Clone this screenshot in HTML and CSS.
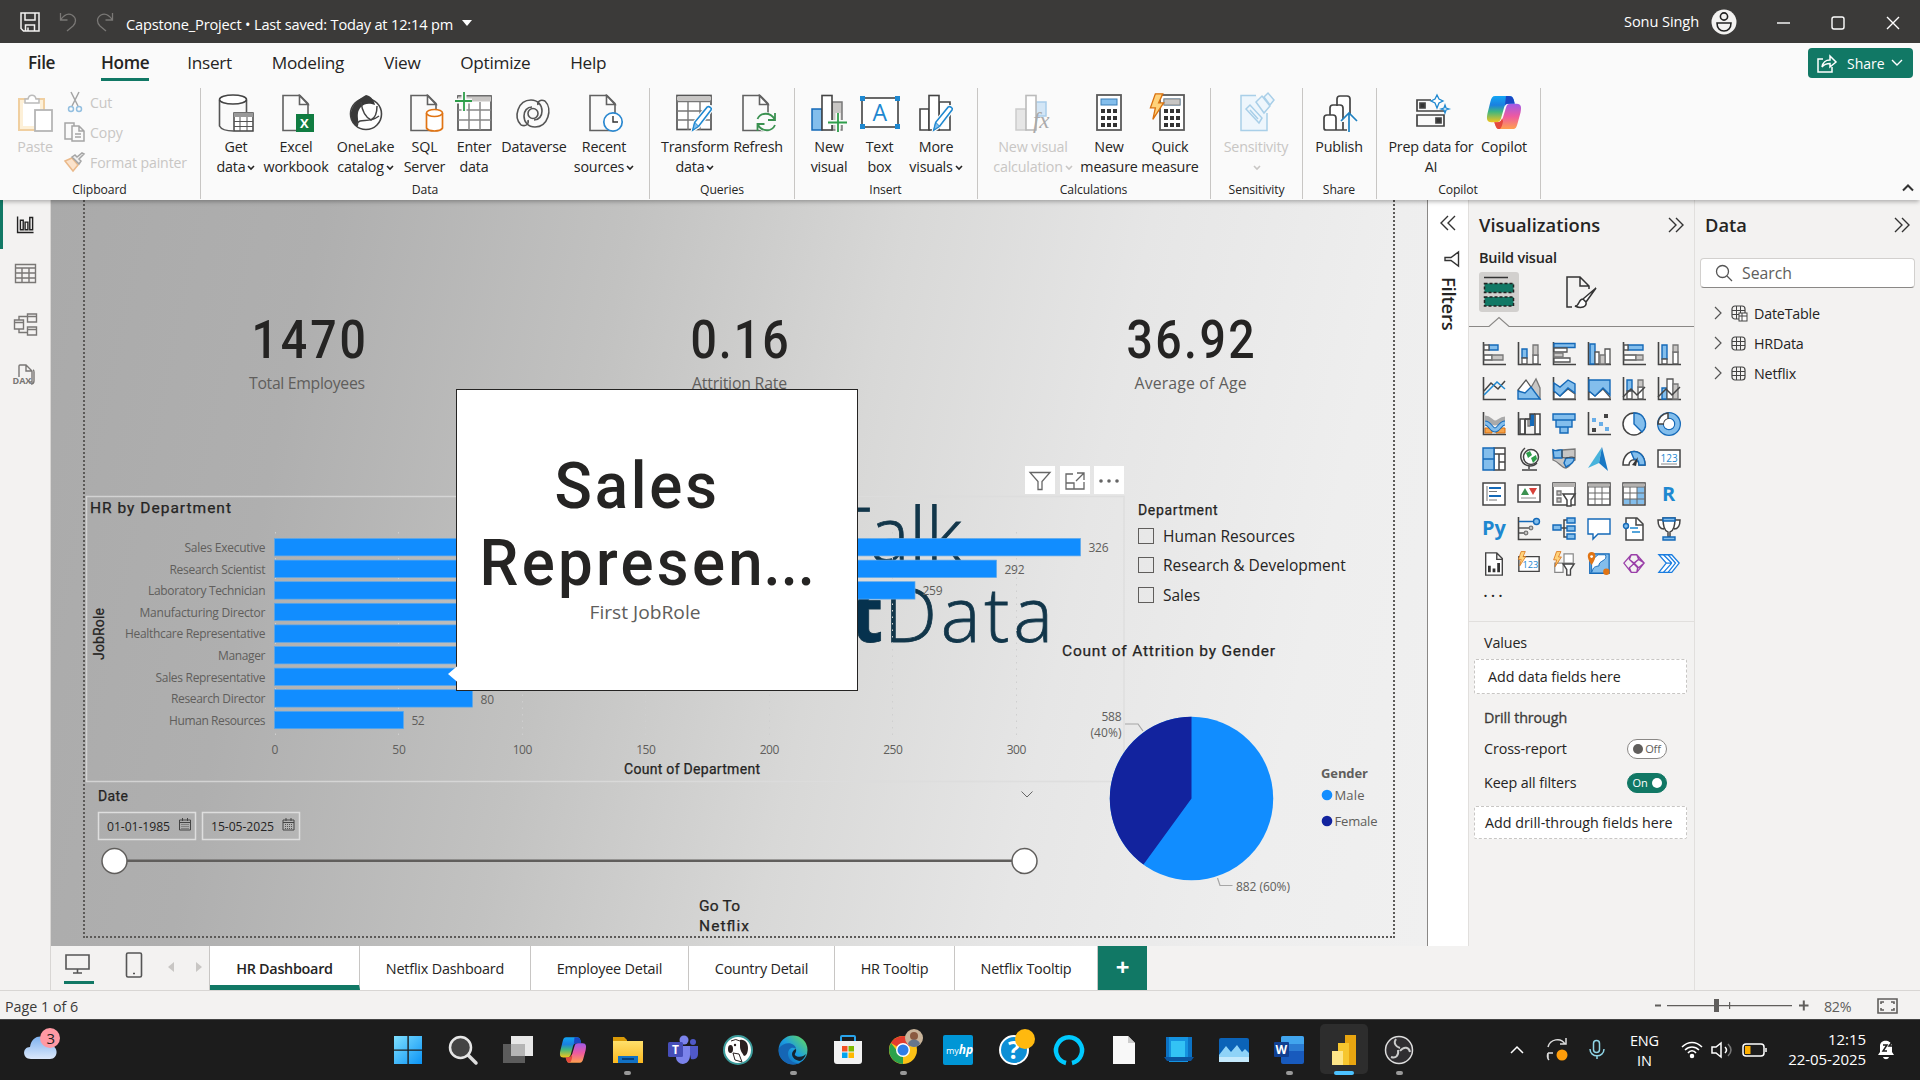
FILE: index.html
```html
<!DOCTYPE html>
<html lang="en">
<head>
<meta charset="utf-8">
<title>Capstone_Project</title>
<link rel="stylesheet" href="styles.css">
</head>
<body>
<svg class="defs" width="0" height="0">
  <defs>
    <linearGradient id="cpA" x1="0" y1="0" x2="0" y2="1"><stop offset="0" stop-color="#12a5f4"/><stop offset=".35" stop-color="#1a80e0"/><stop offset=".6" stop-color="#3fb680"/><stop offset="1" stop-color="#f4c51c"/></linearGradient>
    <linearGradient id="cpB" x1="0" y1="0" x2="0" y2="1"><stop offset="0" stop-color="#a05ae8"/><stop offset=".5" stop-color="#ee5aa0"/><stop offset="1" stop-color="#ffa04e"/></linearGradient>
    <linearGradient id="win" x1="0" y1="0" x2="1" y2="1"><stop offset="0" stop-color="#7fe0ff"/><stop offset="1" stop-color="#0b93f5"/></linearGradient>
    <linearGradient id="edge" x1="0" y1="1" x2="1" y2="0"><stop offset="0" stop-color="#0c59a4"/><stop offset=".5" stop-color="#1b9de2"/><stop offset="1" stop-color="#6be04e"/></linearGradient>
    <linearGradient id="fold" x1="0" y1="0" x2="0" y2="1"><stop offset="0" stop-color="#ffe06b"/><stop offset="1" stop-color="#fbb81f"/></linearGradient>
    <linearGradient id="cloud" x1="0" y1="0" x2="0" y2="1"><stop offset="0" stop-color="#7fb2ef"/><stop offset="1" stop-color="#dbe8fb"/></linearGradient>
    <symbol id="copilot" viewBox="0 0 36 36">
      <path d="M9 1h14c3 0 4 1 5 4l1 4h-6c-3 0-4 1-5 4l-3 11c-1 3-2 4-5 4H5c-5 0-5-4-4-9L4 7c1-4 2-6 5-6z" fill="url(#cpA)"/>
      <path d="M20 1h3c3 0 4 1 5 4l1 4h-6c-2 0-3 0-4 2z" fill="#1947c4"/>
      <path d="M27 35H13c-3 0-3-2-4-5l-1-2h4c3 0 4-2 5-5l3-10c1-3 2-4 5-4h6c5 0 5 4 4 9l-3 11c-1 4-2 6-5 6z" fill="url(#cpB)"/>
      <path d="M8 28h3c3 0 4-1 5-4l1 3c-1 5-2 8-4 8-3 0-4-4-5-7z" fill="#e4493c"/>
    </symbol>
    <symbol id="doc" viewBox="0 0 36 38"><path d="M5 1.500h17l8 8V36.500H5z" fill="#fafafa" stroke="#616161" stroke-width="1.600"/><path d="M21.500 1.500v9H30z" fill="#fff" stroke="#616161" stroke-width="1.600"/></symbol>
    <symbol id="pencil" viewBox="0 0 22 28"><path d="M2 26l2-8L17 2c2-2 5 0 4 3L8 22z" fill="#fff" stroke="#fafafa" stroke-width="4"/><path d="M2 26l2-8L17 2c2-1 5 1 4 3L8 22z" fill="#fff" stroke="#1e88d0" stroke-width="1.600"/><path d="M2 26l2-8 4 4z" fill="#83beec" stroke="#1e88d0"/></symbol>
    <symbol id="dd" viewBox="0 0 8 6"><path d="M1 1l3 3 3-3" fill="none" stroke="currentColor" stroke-width="1.600"/></symbol>
    <symbol id="bolt" viewBox="0 0 18 34"><path d="M7 1h9l-5 11h6L4 32l3-14H1z" fill="#ffd27a" stroke="#d9700f" stroke-width="1.600"/></symbol>
    <symbol id="calc" viewBox="0 0 26 38"><rect x="1" y="1" width="24" height="35" fill="#fff" stroke="#5a5a5a" stroke-width="1.800"/><rect x="5" y="5" width="16" height="6" fill="#83beec" stroke="#3b7fb8"/><path d="M5 17h16M5 24h16M5 31h16" stroke="#333" stroke-width="4" stroke-dasharray="4 2"/></symbol>
    <symbol id="chev2" viewBox="0 0 16 16"><path d="M1 1l7 7-7 7M8 1l7 7-7 7" fill="none" stroke="#333" stroke-width="1.400"/></symbol>
    <symbol id="cal" viewBox="0 0 13 13"><path d="M1 2h11v10H1zM1 4.500h11M4 0v3M9 0v3" fill="none" stroke="#444"/><path d="M3 6.500h7M3 8.500h7M3 10.500h7" stroke="#555" stroke-dasharray="1 1"/></symbol>
    <symbol id="ax" viewBox="0 0 24 24"><path d="M1.500 0v22.500H24" fill="none" stroke="#444" stroke-width="1.600"/></symbol>
    <symbol id="tbl" viewBox="0 0 15 15"><rect x="1" y="1" width="13" height="13" rx="3" fill="none" stroke="#444" stroke-width="1.200"/><path d="M1 5.500h13M1 9.500h13M5.500 1v13M9.500 1v13" stroke="#444"/></symbol>
  </defs>
</svg>

<header class="titlebar">
  <svg class="tb-save" width="20" height="20" viewBox="0 0 20 20" fill="none" stroke="#f3f2f1" stroke-width="1.500"><path d="M1 1h18v18H3.500L1 16.500zM5 1v7h10V1M5.500 19v-6h9v6M8 19v-3.500"/></svg>
  <svg class="tb-undo" width="18" height="20" viewBox="0 0 18 20" fill="none" stroke="#7a7876" stroke-width="1.300"><path d="M1.500 1v7h7M1.500 8C5 3 9 1 13 3c5 3 4 8 1 11l-6 5"/></svg>
  <svg class="tb-redo" width="18" height="20" viewBox="0 0 18 20" fill="none" stroke="#7a7876" stroke-width="1.300"><path d="M16.500 1v7h-7M16.500 8C13 3 9 1 5 3 0 6 1 11 4 14l6 5"/></svg>
  <span class="tb-title">Capstone_Project • Last saved: Today at 12:14 pm</span>
  <i class="tb-caret"></i>
  <span class="tb-user">Sonu Singh</span>
  <svg class="tb-avatar" width="26" height="26" viewBox="0 0 26 26"><circle cx="13" cy="13" r="12.500" fill="#f3f2f1"/><g fill="none" stroke="#222" stroke-width="1.600"><circle cx="13" cy="7.500" r="3.600"/><path d="M6 14h14c0 5-3 8-7 8s-7-3-7-8z"/></g></svg>
  <svg class="tb-win" width="124" height="16" viewBox="0 0 124 16" fill="none" stroke="#fff" stroke-width="1.400"><path d="M1 8h13"/><rect x="56" y="2" width="12" height="12" rx="2"/><path d="M111 2l12 12M123 2l-12 12"/></svg>
</header>

<nav class="menu">
  <span class="m file">File</span><span class="m home">Home</span><span class="m">Insert</span><span class="m">Modeling</span><span class="m">View</span><span class="m">Optimize</span><span class="m">Help</span>
  <div class="share"><svg width="20" height="19" viewBox="0 0 20 19" fill="none" stroke="#fff" stroke-width="1.500"><path d="M6 5H1v13h14v-5M5 13c1-5 3-7 8-7V2l6 6-6 5V9.500c-4 0-6 1-8 3.500z"/></svg><span>Share</span><svg width="12" height="8" viewBox="0 0 12 8" fill="none" stroke="#fff" stroke-width="1.400"><path d="M1 1l5 5 5-5"/></svg></div>
</nav>

<section class="ribbon">
  <div class="group g-clip">
    <div class="items">
      <div class="btn off w-paste"><svg width="36" height="38" viewBox="0 0 36 38"><rect x="2" y="5" width="25" height="31" fill="#fdf0d8" stroke="#f0cfa0" stroke-width="2"/><rect x="6" y="9" width="17" height="23" fill="#fff"/><path d="M8 9V5h3c1-5 7-5 8 0h3v4z" fill="#fff" stroke="#bbb" stroke-width="1.500"/><rect x="18" y="16" width="17" height="21" fill="#fff" stroke="#b5b5b5" stroke-width="1.800"/></svg><span>Paste</span></div>
      <div class="mini">
        <div><svg width="22" height="20" viewBox="0 0 22 20" fill="none" stroke="#a5a5a5" stroke-width="1.500"><path d="M7 0l7 14M15 0L8 14"/><circle cx="7" cy="17" r="2.500" stroke="#93bfe0"/><circle cx="15" cy="17" r="2.500" stroke="#93bfe0"/></svg>Cut</div>
        <div><svg width="22" height="20" viewBox="0 0 22 20" fill="#fafafa" stroke="#a5a5a5" stroke-width="1.500"><path d="M9 17H1V1h9v3"/><path d="M8 4h7l5 5v10H8zM15 4v5h5M11 12h6M11 15h6"/></svg>Copy</div>
        <div><svg width="22" height="20" viewBox="0 0 22 20" fill="none" stroke="#a5a5a5" stroke-width="1.500"><path d="M1 9l7-3 6 7-5 6z" fill="#fbe3cc" stroke="#eab98a"/><path d="M8 5l7 7 2-3-2-2 5-5-2-1-5 4-2-2z" fill="#eee"/></svg>Format painter</div>
      </div>
    </div><div class="glabel">Clipboard</div>
  </div>
  <div class="group g-data">
    <div class="items">
      <div class="btn w50"><svg width="36" height="38" viewBox="0 0 36 38"><path d="M1.500 6v26c2 4 8 5 14 5M28.500 6v12" fill="none" stroke="#555" stroke-width="1.600"/><ellipse cx="15" cy="5.500" rx="13.500" ry="4.500" fill="#fff" stroke="#444" stroke-width="1.600"/><rect x="16" y="19" width="19" height="18" fill="#fff" stroke="#444" stroke-width="1.500"/><path d="M16 21h19" stroke="#999" stroke-width="4"/><path d="M16 27.500h19M16 32.500h19M22 23v14M29 23v14" stroke="#555"/></svg><span>Get<br>data<svg class="dd"><use href="#dd"/></svg></span></div>
      <div class="btn w70"><svg width="36" height="38" viewBox="0 0 36 38"><use href="#doc" width="36" height="38"/><rect x="18" y="20" width="18" height="18" fill="#107c41"/><text x="22" y="34" class="xl">X</text></svg><span>Excel<br>workbook</span></div>
      <div class="btn w69"><svg width="36" height="38" viewBox="0 0 36 38"><circle cx="18" cy="20" r="15.500" fill="#fff" stroke="#444" stroke-width="1.600"/><path d="M18 1C4 8-3 22 9 33c3-2 0-9 1-14 1-6 7-12 17-8-1-5-4-9-9-10z" fill="#3a3a3a"/><path d="M13 8c1 8 4 15 10 18 4-2 6-6 6-14" fill="none" stroke="#444" stroke-width="1.500"/><path d="M8 31c5-9 11 0 23-9" fill="none" stroke="#444" stroke-width="1.500"/></svg><span>OneLake<br>catalog<svg class="dd"><use href="#dd"/></svg></span></div>
      <div class="btn w49"><svg width="40" height="38" viewBox="0 0 40 38"><use href="#doc" x="1" width="36" height="38"/><path d="M21.500 19v15c2 4 14 4 16 0V19" fill="#fff" stroke="#e07414" stroke-width="1.700"/><ellipse cx="29.500" cy="19" rx="8" ry="3.500" fill="#fff" stroke="#e07414" stroke-width="1.700"/></svg><span>SQL<br>Server</span></div>
      <div class="btn w50"><svg width="38" height="38" viewBox="0 0 38 38"><rect x="3" y="2" width="33" height="34" fill="#fff" stroke="#555" stroke-width="1.700"/><path d="M3 5h33" stroke="#c8c6c4" stroke-width="5"/><path d="M3 16h33M3 26h33M14 8v28M25 8v28" stroke="#888" stroke-width="1.500"/><path d="M9-2v19M-1 7h18" stroke="#fafafa" stroke-width="5"/><path d="M9-2v19M0 7h17" stroke="#2e9e4a" stroke-width="1.800"/></svg><span>Enter<br>data</span></div>
      <div class="btn w70"><svg width="38" height="38" viewBox="0 0 38 38" fill="none" stroke="#555" stroke-width="1.600"><path d="M6 31C-2 23 3 6 16 6c7 0 11 5 11 11 0 5-3 9-8 9M6 31c5 2 8-1 7-5M30 7c8 8 3 26-10 26-7 0-11-5-11-11 0-5 3-9 8-9M30 7c-5-2-8 1-7 4"/><circle cx="18" cy="19.500" r="5"/></svg><span>Dataverse</span></div>
      <div class="btn w70"><svg width="40" height="38" viewBox="0 0 40 38"><use href="#doc" x="1" width="36" height="38"/><circle cx="29" cy="28" r="9.200" fill="#fff" stroke="#2b88d0" stroke-width="1.700"/><path d="M29 22v6h5" fill="none" stroke="#333" stroke-width="1.400"/></svg><span>Recent<br>sources<svg class="dd"><use href="#dd"/></svg></span></div>
    </div><div class="glabel">Data</div>
  </div>
  <div class="group g-q">
    <div class="items">
      <div class="btn w70"><svg width="40" height="38" viewBox="0 0 40 38"><rect x="2" y="1.500" width="34" height="34" fill="#fff" stroke="#555" stroke-width="1.700"/><path d="M2 4.500h34" stroke="#c8c6c4" stroke-width="4"/><path d="M2 7.500h34M2 17h34M2 26h34M13 8v28M25 8v28" stroke="#777" stroke-width="1.400"/><use href="#pencil" x="14" y="11" width="25" height="27"/></svg><span>Transform<br>data<svg class="dd"><use href="#dd"/></svg></span></div>
      <div class="btn w56"><svg width="40" height="38" viewBox="0 0 40 38"><use href="#doc" x="0" width="36" height="38"/><circle cx="28" cy="28" r="10" fill="#fafafa"/><path d="M19.500 25c3-7 13-7 17 0M37 19v7h-7M37 31c-3 7-13 7-17 0M19.500 37v-7h7" fill="none" stroke="#3a9150" stroke-width="1.800"/></svg><span>Refresh</span></div>
    </div><div class="glabel">Queries</div>
  </div>
  <div class="group g-i">
    <div class="items">
      <div class="btn w50"><svg width="38" height="38" viewBox="0 0 38 38"><rect x="2" y="15" width="10" height="21" fill="#83beec" stroke="#1469b8" stroke-width="1.500"/><rect x="22" y="8" width="10" height="28" fill="#c8c6c4" stroke="#777" stroke-width="1.500"/><rect x="12" y="1.500" width="10" height="34.500" fill="#fff" stroke="#444" stroke-width="1.600"/><path d="M28 19v19M18 28.500h20" stroke="#fafafa" stroke-width="5"/><path d="M28 19v19M18 28.500h19" stroke="#2e9e4a" stroke-width="1.800"/></svg><span>New<br>visual</span></div>
      <div class="btn w51"><svg width="40" height="38" viewBox="0 0 40 38"><rect x="2" y="4" width="36" height="29" fill="#fff" stroke="#444" stroke-width="1.600"/><path d="M0 2h5v5H0zM35 2h5v5h-5zM0 30h5v5H0zM35 30h5v5h-5z" fill="#1e88d0"/><text x="12.500" y="27" class="tbx">A</text></svg><span>Text<br>box</span></div>
      <div class="btn w62"><svg width="40" height="38" viewBox="0 0 40 38"><path d="M4 15h9v21H4zM23 8h11v28H23z" fill="#fff" stroke="#444" stroke-width="1.600"/><rect x="13" y="1.500" width="10" height="34.500" fill="#fff" stroke="#444" stroke-width="1.600"/><use href="#pencil" x="14" y="11" width="25" height="27"/></svg><span>More<br>visuals<svg class="dd"><use href="#dd"/></svg></span></div>
    </div><div class="glabel">Insert</div>
  </div>
  <div class="group g-c">
    <div class="items">
      <div class="btn off w92"><svg width="38" height="38" viewBox="0 0 38 38"><rect x="2" y="15" width="10" height="21" fill="#e6e6e6" stroke="#ccc" stroke-width="1.500"/><rect x="22" y="8" width="10" height="14" fill="#d3e6f6" stroke="#a9cdea" stroke-width="1.500"/><rect x="12" y="1.500" width="10" height="34.500" fill="#fff" stroke="#bbb" stroke-width="1.600"/><text x="19" y="34" class="fx">fx</text></svg><span>New visual<br>calculation<svg class="dd"><use href="#dd"/></svg></span></div>
      <div class="btn w60"><svg width="26" height="38"><use href="#calc" width="26" height="38"/></svg><span>New<br>measure</span></div>
      <div class="btn w62"><svg width="40" height="38" viewBox="0 0 40 38"><use href="#calc" x="9" width="26" height="38"/><rect x="14" y="5" width="16" height="6" fill="#c8c6c4" stroke="#888"/><use href="#bolt" x="-1" y="-1" width="16" height="28"/></svg><span>Quick<br>measure</span></div>
    </div><div class="glabel">Calculations</div>
  </div>
  <div class="group g-s">
    <div class="items">
      <div class="btn off w70"><svg width="38" height="38" viewBox="0 0 38 38" fill="#eef6fc" stroke="#a9cfe8" stroke-width="1.500"><path d="M19 1.500H4v35h26V19"/><path d="M9 15l4-4 12 13-3 5zM13 16l8 9M19 8l6-6 8 10-6 7zM27 3l4-4 6 7-4 5z"/></svg><span>Sensitivity<br><svg class="dd"><use href="#dd"/></svg></span></div>
    </div><div class="glabel">Sensitivity</div>
  </div>
  <div class="group g-p">
    <div class="items">
      <div class="btn w54"><svg width="38" height="38" viewBox="0 0 38 38" fill="#fff" stroke="#444" stroke-width="1.700"><path d="M17 12V5q0-3 3-3h7q3 0 3 3v16M10 22v-8q0-3 3-3h7q3 0 3 3v11"/><path d="M27 36H6q-2 0-2-2V24q0-3 3-3h6q3 0 3 3v12M23 36v-8"/><path d="M29 38V20M21 27l8-8 8 8" fill="none" stroke="#1e80c0"/></svg><span>Publish</span></div>
    </div><div class="glabel">Share</div>
  </div>
  <div class="group g-o">
    <div class="items">
      <div class="btn w90"><svg width="38" height="38" viewBox="0 0 38 38" fill="none" stroke="#444" stroke-width="1.700"><path d="M19 6H5v11h27M5 21h27v11H5z"/><path d="M8 9h5v5H8zM24 24h5v5h-5z" fill="#333"/><path d="M25 1l2 4 4 2-4 2-2 5-2-5-4-2 4-2zM33 11l1 3 3 1-3 1-1 3-1-3-3-1 3-1z" fill="#fff" stroke="#1e88d0" stroke-width="1.300"/></svg><span>Prep data for<br>AI</span></div>
      <div class="btn w56 cop"><svg width="38" height="38"><use href="#copilot" width="38" height="35" y="1"/></svg><span>Copilot</span></div>
    </div><div class="glabel">Copilot</div>
  </div>
  <svg class="collapse" width="12" height="8" viewBox="0 0 12 8" fill="none" stroke="#333" stroke-width="2"><path d="M1 6.500l5-5 5 5"/></svg>
</section>

<main class="work">
  <aside class="rail">
    <svg class="sel" width="50" height="49" viewBox="0 0 50 49" fill="none" stroke="#222" stroke-width="1.500"><path d="M15.500 16v17h17M18.500 20h3v10h-3zM23.500 22h3v8h-3zM28.500 17h3v13h-3z"/></svg>
    <svg width="50" height="49" viewBox="0 0 50 49" fill="none" stroke="#797775" stroke-width="1.400"><path d="M15.500 14.500h20v18h-20zM15.500 18h20M15.500 23h20M15.500 28h20M22 18v14M29 18v14"/></svg>
    <svg width="50" height="49" viewBox="0 0 50 49" fill="none" stroke="#797775" stroke-width="1.400"><path d="M27.500 14h9v8h-9zM27.500 16.500h9M27.500 27h9v8h-9zM27.500 29.500h9M14.500 20h9v9h-9zM14.500 22.500h9M19 19.500v-3h8M19 29.500v3h8"/></svg>
    <svg width="50" height="49" viewBox="0 0 50 49" fill="none" stroke="#797775" stroke-width="1.400"><path d="M19 27V16q0-1 1-1h6l6 6v11h-3M26 15v6h6M33 20q1 0 1 2v9q0 3-3 3"/><text x="12.500" y="34" class="dax">DAX</text></svg>
  </aside>

  <div class="center">
    <div class="canvas">
      <div class="pageframe"></div>
      <svg class="v brand" width="260" height="160" viewBox="830 495 260 160"><text x="831" y="562" textLength="131" lengthAdjust="spacingAndGlyphs" class="lg">Talk</text><text x="883" y="642" text-anchor="end" class="lg b">st</text><text x="884" y="642" textLength="169" class="lg">Data</text></svg>

      <svg class="v card c1" width="130" height="90" viewBox="245 305 130 90"><g transform="translate(251.500 357.500) scale(.86 1)"><text textLength="133" class="num">1470</text></g><text x="249" y="389" textLength="116" class="cap">Total Employees</text></svg>
      <svg class="v card c2" width="130" height="90" viewBox="680 305 130 90"><g transform="translate(690.500 357.500) scale(.86 1)"><text textLength="114" class="num">0.16</text></g><text x="692" y="389" textLength="95" class="cap">Attrition Rate</text></svg>
      <svg class="v card c3" width="150" height="90" viewBox="1115 305 150 90"><g transform="translate(1126.500 357.500) scale(.86 1)"><text textLength="149" class="num">36.92</text></g><text x="1134.500" y="389" textLength="112" class="cap">Average of Age</text></svg>

      <svg class="v bars" width="1040" height="288" viewBox="85 495 1040 288">
        <rect x="86.500" y="496.500" width="1037.500" height="285" fill="none" stroke="#dcdcdc" stroke-width="1.500" stroke-opacity=".8"/>
        <text x="90" y="512.500" textLength="141" class="din t">HR by Department</text>
        <g stroke="#cfcfcf" stroke-dasharray="1.500 5"><path d="M275.500 532v205M398.500 532v205M522.500 532v205M645.500 532v205M769.500 532v205M892.500 532v205M1016.500 532v205"/></g>
        <g fill="#118dff" stroke="#5fa8ea" stroke-width=".7">
          <rect x="274.500" y="538.500" width="806" height="17.400"/><rect x="274.500" y="560.100" width="722" height="17.400"/><rect x="274.500" y="581.700" width="640.500" height="17.400"/><rect x="274.500" y="603.300" width="358" height="17.400"/><rect x="274.500" y="624.900" width="324" height="17.400"/><rect x="274.500" y="646.500" width="252" height="17.400"/><rect x="274.500" y="668.100" width="205" height="17.400"/><rect x="274.500" y="689.700" width="198" height="17.400"/><rect x="274.500" y="711.300" width="129" height="17.400"/>
        </g>
        <g class="ct">
          <text x="184.500" y="552" textLength="81">Sales Executive</text><text x="169.500" y="573.700" textLength="96">Research Scientist</text><text x="148" y="595" textLength="117.500">Laboratory Technician</text><text x="139.500" y="617" textLength="126">Manufacturing Director</text><text x="125" y="638" textLength="140.500">Healthcare Representative</text><text x="218" y="660" textLength="47.500">Manager</text><text x="155.500" y="682" textLength="110">Sales Representative</text><text x="171" y="703" textLength="94.500">Research Director</text><text x="169" y="725" textLength="96.500">Human Resources</text>
          <text x="1088.500" y="552" textLength="20">326</text><text x="1004.500" y="573.700" textLength="20">292</text><text x="922.500" y="595" textLength="20">259</text><text x="480.500" y="704" textLength="13.500">80</text><text x="411.500" y="725" textLength="13">52</text>
          <g text-anchor="middle"><text x="275" y="753.500">0</text><text x="399" y="753.500">50</text><text x="522.500" y="753.500" textLength="19.500">100</text><text x="646" y="753.500" textLength="19.500">150</text><text x="769.500" y="753.500" textLength="19.500">200</text><text x="893" y="753.500" textLength="19.500">250</text><text x="1016.500" y="753.500" textLength="19.500">300</text></g>
        </g>
        <text x="624" y="774" textLength="136" class="din a">Count of Department</text>
        <text transform="translate(103.500 660) rotate(-90)" textLength="52" class="din a">JobRole</text>
      </svg>
      <div class="hdrbtns">
        <svg width="30" height="28" viewBox="0 0 30 28" fill="none" stroke="#666" stroke-width="1.300"><path d="M5 6.500h20l-8 9v8h-4v-8z"/></svg>
        <svg width="30" height="28" viewBox="0 0 30 28" fill="none" stroke="#666" stroke-width="1.300"><path d="M13 8H6v15h18v-7M17 7h7v7M24 7l-8 8M6 17h8v6"/></svg>
        <svg width="30" height="28" viewBox="0 0 30 28" fill="#666"><circle cx="7" cy="15" r="1.800"/><circle cx="15" cy="15" r="1.800"/><circle cx="23" cy="15" r="1.800"/></svg>
      </div>

      <div class="v slicer">
        <div class="sl-t">Department</div>
        <label><i></i>Human Resources</label><label><i></i>Research &amp; Development</label><label><i></i>Sales</label>
      </div>

      <svg class="v pie" width="335" height="260" viewBox="1055 635 335 260">
        <text x="1062" y="655.500" textLength="213" class="din t">Count of Attrition by Gender</text>
        <circle cx="1191.500" cy="798.500" r="81.700" fill="#118dff"/>
        <path d="M1191.500 798.500L1143.480 864.600A81.700 81.700 0 0 1 1191.500 716.800z" fill="#12239e"/>
        <path d="M1125 724h13l5 7M1217.500 878l2.500 7.500h12.500" fill="none" stroke="#a6a6a6" stroke-width="1.200"/>
        <g class="ct"><text x="1101.500" y="721" textLength="20">588</text><text x="1090.500" y="737" textLength="31">(40%)</text><text x="1236" y="890.500" textLength="54">882 (60%)</text></g>
        <g class="lt"><text x="1321" y="778" textLength="47" font-weight="700">Gender</text><text x="1334.500" y="800" textLength="30">Male</text><text x="1334.500" y="826" textLength="43">Female</text></g>
        <circle cx="1327" cy="795" r="5.300" fill="#118dff"/><circle cx="1327" cy="821" r="5.300" fill="#12239e"/>
      </svg>

      <svg class="v date" width="960" height="100" viewBox="90 780 960 100">
        <text x="98" y="801" textLength="30" class="din a">Date</text>
        <path d="M1021.500 791.500l5.500 5.500 5.500-5.500" fill="none" stroke="#666"/>
        <g fill="none" stroke="#dedede" stroke-width="1.500"><rect x="98.500" y="812.500" width="97" height="27"/><rect x="202.500" y="812.500" width="97" height="27"/></g>
        <g class="dt"><text x="107" y="830.500" textLength="63">01-01-1985</text><text x="211" y="830.500" textLength="63">15-05-2025</text></g>
        <use href="#cal" x="178.500" y="818" width="13" height="13"/><use href="#cal" x="282" y="818" width="13" height="13"/>
        <path d="M114 860.700h910" stroke="#605e5c" stroke-width="2.500"/>
        <g fill="#fff" stroke="#605e5c" stroke-width="1.500"><circle cx="114.500" cy="861" r="12.500"/><circle cx="1024.500" cy="861" r="12.500"/></g>
      </svg>
      <svg class="v goto" width="70" height="45" viewBox="690 892 70 45"><text x="699" y="910.500" textLength="41" class="din t">Go To</text><text x="699" y="930.500" textLength="50" class="din t">Netflix</text></svg>

      <svg class="v tip" width="412" height="304" viewBox="447 388 412 304">
        <rect x="456.500" y="389.500" width="401" height="301" fill="#fff" stroke="#252423"/><path d="M458 665.500v17l-10-8.500z" fill="#fff"/>
        <g transform="translate(554.500 508) scale(.95 1)"><text textLength="171" class="big">Sales</text></g>
        <g transform="translate(479.500 585) scale(.95 1)"><text x="0" y="0" textLength="298" class="big">Represen</text><text x="299" y="0" class="big">...</text></g>
        <text x="589.500" y="619" textLength="111" lengthAdjust="spacingAndGlyphs" class="cap f">First JobRole</text>
      </svg>
    </div>
    <div class="pages">
      <div class="views">
        <svg width="30" height="38" viewBox="0 0 30 38" fill="none" stroke="#555" stroke-width="1.600"><path d="M2 9h23v14H2zM13.500 23v4M9 27h9"/><path d="M0 36.500h30" stroke="#117865" stroke-width="3"/></svg>
        <svg width="18" height="26" viewBox="0 0 18 26" fill="none" stroke="#555" stroke-width="1.600"><rect x="1.500" y="1" width="15" height="24" rx="1.500"/><path d="M8 21.500h2"/></svg>
        <i class="ar l"></i><i class="ar r"></i>
      </div>
      <div class="tab on t1">HR Dashboard</div><div class="tab t2">Netflix Dashboard</div><div class="tab t3">Employee Detail</div><div class="tab t4">Country Detail</div><div class="tab t5">HR Tooltip</div><div class="tab t6">Netflix Tooltip</div><div class="add">+</div>
    </div>
  </div>

  <aside class="filters">
    <svg width="16" height="16" class="flip"><use href="#chev2" width="16" height="16"/></svg>
    <svg width="16" height="16" viewBox="0 0 16 16" fill="none" stroke="#333" stroke-width="1.400"><path d="M14.500 1v14L7 9.500H1v-3h6z"/></svg>
    <span>Filters</span>
  </aside>

  <aside class="viz">
    <div class="phead"><b>Visualizations</b><svg width="16" height="16"><use href="#chev2" width="16" height="16"/></svg></div>
    <div class="bv">Build visual</div>
    <div class="modes">
      <svg class="msel" width="40" height="40" viewBox="0 0 40 40"><path d="M5 5.500h24" stroke="#333" stroke-width="1.500"/><g fill="#117865" stroke="#222" stroke-width="1.500" stroke-dasharray="3 2"><rect x="5.500" y="11.500" width="29" height="9"/><rect x="5.500" y="25" width="29" height="9"/></g></svg>
      <svg width="34" height="34" viewBox="0 0 34 34" fill="none" stroke="#333" stroke-width="1.500"><path d="M7 32H2V2h13l9 9v3M15 2v9h9"/><path d="M31 13L21 27l-3-3zM18 24c-5 0-3 7-8 7 6 3 12 1 11-4" fill="#fff"/></svg>
    </div>
    <svg class="notch" width="225" height="12" viewBox="0 0 225 12" fill="none" stroke="#8a8886" stroke-width="1.200"><path d="M0 10.500h20l10-9 10 9h185"/></svg>
    <div class="grid">
      <svg viewBox="0 0 24 24"><use href="#ax"/><path class="b" d="M7 3h9v5H7z"/><path class="w" d="M2 3h5v5H2zM2 13h8v5H2z"/><path class="g" d="M10 13h11v5H10z"/></svg>
      <svg viewBox="0 0 24 24"><use href="#ax"/><path class="b" d="M5 7h5v9H5z"/><path class="w" d="M5 16h5v6H5zM16 13h5v9h-5z"/><path class="g" d="M16 3h5v10h-5z"/></svg>
      <svg viewBox="0 0 24 24"><use href="#ax"/><path class="b" d="M2 1.500h21v4H2z"/><path class="w" d="M2 6h13v4H2zM2 16h16v4H2z"/><path class="g" d="M2 11h9v4H2z"/></svg>
      <svg viewBox="0 0 24 24"><use href="#ax"/><path class="b" d="M3 2h5v20H3z"/><path class="w" d="M8 10h4v12H8zM18 7h5v15h-5z"/><path class="g" d="M13 13h5v9h-5z"/></svg>
      <svg viewBox="0 0 24 24"><use href="#ax"/><path class="b" d="M6 3h15v5H6z"/><path class="w" d="M2 3h4v5H2zM2 13h12v5H2z"/><path class="g" d="M14 13h7v5h-7z"/></svg>
      <svg viewBox="0 0 24 24"><use href="#ax"/><path class="b" d="M5 3h5v14H5z"/><path class="w" d="M5 17h5v5H5zM16 10h5v12h-5z"/><path class="g" d="M16 3h5v7h-5z"/></svg>

      <svg viewBox="0 0 24 24"><use href="#ax"/><path class="n" d="M2 14l7-8 7 6 7-8"/><path d="M2 18L15 5l8 7" fill="none" stroke="#1e88d0" stroke-width="1.500"/></svg>
      <svg viewBox="0 0 24 24"><path class="g" d="M12 14l7-12 4 9v11z"/><path class="w" d="M1 13L9 3l7 10-8 8z"/><path class="b" d="M1 14v8h22l-9-12-6 6z"/></svg>
      <svg viewBox="0 0 24 24"><use href="#ax"/><path class="w" d="M2 14l6 5 8-7 7 5v5H2z"/><path class="b" d="M2 6l6 4 8-7 7 4v9l-7-5-8 8-6-5z"/></svg>
      <svg viewBox="0 0 24 24"><use href="#ax"/><path class="w" d="M2 14l6 5 8-7 7 8v2H2z"/><path class="b" d="M2 3h21v15l-7-7-8 8-6-5z"/></svg>
      <svg viewBox="0 0 24 24"><use href="#ax"/><path class="b" d="M5 3h5v11H5z"/><path class="w" d="M5 14h5v8H5zM16 10h5v12h-5z"/><path class="g" d="M16 3h5v7h-5z"/><path class="n" d="M1 20l8-8 6 6 8-8"/></svg>
      <svg viewBox="0 0 24 24"><use href="#ax"/><path class="b" d="M5 11h5v11H5z"/><path class="w" d="M10 2h6v20h-6z"/><path class="g" d="M16 7h5v15h-5z"/><path class="n" d="M1 20l8-8 6 6 8-8"/></svg>

      <svg viewBox="0 0 24 24"><path d="M3 16h7v5H3zM14 16h9v5h-9z" fill="#f5a34a" stroke="#d9700f"/><path d="M3 6c5 0 6 5 10 5s5-4 10-4" fill="none" stroke="#aaa" stroke-width="5"/><path d="M3 11c5 0 6 7 10 7s5-7 10-7" fill="none" stroke="#1469b8" stroke-width="5"/><path d="M3 11c5 0 6 7 10 7s5-7 10-7" fill="none" stroke="#83beec" stroke-width="3"/><use href="#ax"/></svg>
      <svg viewBox="0 0 24 24"><use href="#ax"/><path class="w nn" d="M3 7h5v15H3zM18 2h5v20h-5z"/><path class="g" d="M8 7h5v7h-2V8z"/><path d="M13 2h4v12h-4z" fill="#1469b8"/><path class="n" d="M8 7h5V2h5M8 7v15"/></svg>
      <svg viewBox="0 0 24 24"><path class="b" d="M1 2h22v6H1zM4 8h16v7H4zM8 15h8v6H8z"/></svg>
      <svg viewBox="0 0 24 24"><use href="#ax"/><path d="M5 6h4v4H5zM12 10h4v4h-4zM18 15h4v4h-4z" fill="#69aee8"/><path d="M17 2h4v4h-4zM5 16h4v4H5z" fill="#444"/></svg>
      <svg viewBox="0 0 24 24"><circle cx="12" cy="12" r="11" fill="#fff" stroke="#444" stroke-width="1.500"/><path class="b" d="M12 1a11 11 0 0 1 8 19l-8-8z"/></svg>
      <svg viewBox="0 0 24 24"><circle cx="12" cy="12" r="8.500" fill="none" stroke="#1469b8" stroke-width="7"/><circle cx="12" cy="12" r="8.500" fill="none" stroke="#83beec" stroke-width="4.500"/><path class="w nn" d="M1 12A11 11 0 0 1 11 1v6a5 5 0 0 0-4 5z"/><circle cx="12" cy="12" r="5" fill="#fff"/></svg>

      <svg viewBox="0 0 24 24"><path class="w nn" d="M12 1h11v22H12zM12 7h11M17 7v16M17 15h6"/><path class="b" d="M1 1h11v22H1zM1 12h11"/></svg>
      <svg viewBox="0 0 24 24"><circle cx="14" cy="10" r="7.500" fill="#fff" stroke="#444" stroke-width="1.500"/><path d="M9 6l4-2 2 4-4 3zM14 11l5-3 1 4-4 4z" fill="#2e9e4a"/><path class="n" d="M8 1c-7 6-5 17 5 18 3 0 5-1 7-3M12 19v3M5 23h15"/></svg>
      <svg viewBox="0 0 24 24"><path class="g" d="M1 3c4 2 6-1 9 0l13-1v11c-4 1-4 7-9 8-4 0-7-6-13-8z"/><path class="b" d="M1 3c4 2 6-1 9 0v8H2zM14 11h8c1 4-4 7-8 9l-2-4z"/><path d="M10 3v7c5 3 8-2 13 1" fill="none" stroke="#444"/></svg>
      <svg viewBox="0 0 24 24"><path d="M15 0L1 21l11-5z" fill="#47b3dc"/><path d="M15 0l6 24-9-8z" fill="#1878c4"/></svg>
      <svg viewBox="0 0 24 24"><path class="w nn" d="M1 18C1 0 23 0 23 18h-6c0-7-10-7-10 0z"/><path class="b" d="M9 5c7-2 14 3 14 13h-6c0-4-2-6-5-6z"/><path d="M10 18l6-8-2 9z" fill="#333"/></svg>
      <svg viewBox="0 0 24 24"><path class="w nn" d="M1 3h22v17H1z"/><text x="3.500" y="14.500" class="i123">123</text><path d="M4 17h16" stroke="#888"/></svg>

      <svg viewBox="0 0 24 24"><path class="w nn" d="M1 1h22v22H1z"/><path d="M5 4v15M7 9.500h8M7 18h8" stroke="#777"/><path d="M7 6h12M7 14h12" stroke="#1469b8" stroke-width="2"/></svg>
      <svg viewBox="0 0 24 24"><path class="w nn" d="M1 3h22v17H1z"/><path d="M4 13l4-7 4 7z" fill="#3a9150"/><path d="M12 6h8l-4 7z" fill="#d8413a"/><path d="M4 16h15" stroke="#888"/></svg>
      <svg viewBox="0 0 24 24"><path class="w nn" d="M1 1h22v22H1z"/><path d="M1 3h22" stroke="#b5b3b1" stroke-width="4"/><path class="g" d="M5 9h4v4H5zM5 16h4v4H5z"/><path class="w nn" d="M11 12h12l-4 6v6h-4v-6z"/></svg>
      <svg viewBox="0 0 24 24"><path class="w nn" d="M1 1h22v22H1z"/><path d="M1 3h22" stroke="#b5b3b1" stroke-width="3"/><path class="n th" d="M1 5h22M1 11h22M1 17h22M8 5v18M15 5v18"/></svg>
      <svg viewBox="0 0 24 24"><path class="w nn" d="M1 1h22v22H1z"/><path d="M1 3h22" stroke="#b5b3b1" stroke-width="3"/><path d="M15 5h7v17H2v-5h13z" fill="#83beec"/><path class="n th" d="M1 5h22M1 11h22M1 17h22M8 5v18M15 5v18"/></svg>
      <svg viewBox="0 0 24 24"><text x="5" y="19" class="ir">R</text></svg>

      <svg viewBox="0 0 24 24"><text x="0" y="18" class="ir">Py</text></svg>
      <svg viewBox="0 0 24 24"><use href="#ax"/><path d="M2 4.500h15" stroke="#1469b8" stroke-width="1.500"/><circle class="b" cx="19.500" cy="4.500" r="3"/><path d="M2 11h10M2 16h5" stroke="#555" stroke-width="1.500"/><circle class="g" cx="14" cy="11" r="1.800"/><circle class="g" cx="9" cy="16" r="1.800"/></svg>
      <svg viewBox="0 0 24 24"><path class="n" d="M8 11h7M15 3h-3v17h3"/><path class="b" d="M1 8h8v5H1zM15 1h8v5h-8zM15 9h8v5h-8zM15 17h8v5h-8z"/></svg>
      <svg viewBox="0 0 24 24"><path class="b hollow" d="M1 2h22v15H11l-5 5v-5H1z"/></svg>
      <svg viewBox="0 0 24 24"><path class="w nn" d="M4 1h11l6 6v16H4z"/><path class="n" d="M14 1v7h7"/><path d="M8 11h8M10 15h8" stroke="#1e88d0" stroke-width="1.500"/><circle class="b" cx="4" cy="9" r="2.500"/></svg>
      <svg viewBox="0 0 24 24"><path class="w nn" d="M6 3H1c0 6 2 9 6 9M18 3h5c0 6-2 9-6 9M6 1h12c0 8-1 13-5 14v5h-2v-5C7 14 6 9 6 1z"/><path class="b" d="M6 1h12v3H6zM6 20h12v3H6z"/></svg>

      <svg viewBox="0 0 24 26"><path class="w nn" d="M3 1h12l6 6v18H3zM15 1v7h6"/><path d="M7 22v-7M12 22v-4M17 22V12" stroke="#333" stroke-width="3"/></svg>
      <svg viewBox="0 0 24 26"><path class="w nn" d="M1 5h22v16H1z"/><text x="5" y="17" class="i123">123</text><use href="#bolt" x="-2" y="-1" width="13" height="17"/></svg>
      <svg viewBox="0 0 24 26"><path class="w soft" d="M12 2h10v10H12zM2 12h9v10H2z"/><path class="w nn" d="M11 13h12l-4 6v6h-4v-6z"/><use href="#bolt" x="-2" y="-1" width="14" height="18"/></svg>
      <svg viewBox="0 0 24 26"><path class="b" d="M2 2h21v21H2z"/><path d="M11 3h8c3 7-8 6-7 12-7 1-6 3-8 7V9z" fill="#fff" stroke="#1469b8"/><path d="M4 14C-2 6-1 0 4 0s6 6 0 14zM20 18a3.500 3.500 0 1 1 0 7 3.500 3.500 0 1 1 0-7z" fill="#e07414"/><circle cx="4" cy="5" r="1.500" fill="#fff"/></svg>
      <svg viewBox="0 0 24 26" fill="none" stroke="#9a3fa8" stroke-width="1.400"><path d="M1 12L9 3h6l8 9-8 10H9zM9 3l-2 5 9 9-1 5M15 3l2 5-10 9 2 5M12 12l5-4 6 4-6 5zM12 12L7 8"/></svg>
      <svg viewBox="0 0 24 26" fill="#fff" stroke="#1a7de0" stroke-width="1.400"><path d="M1 3h14l8 9-8 10H1l8-10z"/><path d="M6 3l9 9M11 3l8 9-8 10M15 12l-9 10M9 12h6" fill="none"/></svg>
    </div>
    <div class="dots">···</div>
    <div class="wells">
      <div class="wl">Values</div>
      <div class="well a">Add data fields here</div>
      <div class="wl dr">Drill through</div>
      <div class="row"><span>Cross-report</span><em class="tg"><i></i>Off</em></div>
      <div class="row"><span>Keep all filters</span><em class="tg on">On<i></i></em></div>
      <div class="well b">Add drill-through fields here</div>
    </div>
  </aside>

  <aside class="data">
    <div class="phead"><b>Data</b><svg width="16" height="16"><use href="#chev2" width="16" height="16"/></svg></div>
    <div class="search"><svg width="18" height="18" viewBox="0 0 18 18" fill="none" stroke="#555" stroke-width="1.300"><circle cx="7.500" cy="7.500" r="6"/><path d="M12 12l5 5"/></svg>Search</div>
    <div class="tree">
      <div><svg width="8" height="14" viewBox="0 0 8 14"><path d="M1 1l6 6-6 6" fill="none" stroke="#555" stroke-width="1.200"/></svg><svg width="17" height="17" viewBox="0 0 17 17"><use href="#tbl" width="15" height="15"/><rect x="8" y="8" width="8" height="8" fill="#fff" stroke="#444"/><path d="M8 11h8M11 8v8" stroke="#444"/></svg>DateTable</div>
      <div><svg width="8" height="14" viewBox="0 0 8 14"><path d="M1 1l6 6-6 6" fill="none" stroke="#555" stroke-width="1.200"/></svg><svg width="17" height="17" viewBox="0 -1 17 17"><use href="#tbl" width="15" height="15"/></svg>HRData</div>
      <div><svg width="8" height="14" viewBox="0 0 8 14"><path d="M1 1l6 6-6 6" fill="none" stroke="#555" stroke-width="1.200"/></svg><svg width="17" height="17" viewBox="0 -1 17 17"><use href="#tbl" width="15" height="15"/></svg>Netflix</div>
    </div>
  </aside>
</main>

<div class="status">
  <span>Page 1 of 6</span>
  <svg width="160" height="20" viewBox="1650 996 160 20" fill="#605e5c"><path d="M1655 1004.500h6v2h-6zM1667 1005h125v1.300h-125zM1714 999h5v13h-5zM1729 1002h1.200v7h-1.200zM1799 1004.500h9.500v2h-9.500zM1802.800 1000.500h2v10h-2z"/></svg>
  <span class="pct">82%</span>
  <svg width="21" height="16" viewBox="0 0 21 16" fill="none" stroke="#605e5c" stroke-width="1.600"><path d="M1 1h19v14H1zM4 6V4h3M14 4h3v2M4 10v2h3M14 12h3v-2"/></svg>
</div>

<footer class="taskbar">
  <svg class="weather" width="40" height="40" viewBox="0 0 40 40"><path d="M9 32c-9 0-9-12-1-12 2-14 18-13 19-2 10 0 10 14 1 14z" fill="url(#cloud)"/><circle cx="28" cy="11" r="10" fill="#ff99a4"/><text x="24.500" y="16.500" class="bdg">3</text></svg>
  <div class="apps">
    <div><svg viewBox="0 0 30 30" fill="url(#win)"><path d="M1 1h13.400v13.400H1zM15.800 1H29v13.400H15.800zM1 15.800h13.400V29H1zM15.800 15.800H29V29H15.800z"/></svg></div>
    <div><svg viewBox="0 0 30 30"><path d="M20 20l8 8" stroke="#ddd" stroke-width="3.500" stroke-linecap="round"/><circle cx="12.500" cy="12.500" r="10.500" fill="#444" stroke="#e6e6e6" stroke-width="2.500"/></svg></div>
    <div><svg viewBox="0 0 30 30"><path d="M0 9h22v19H0z" fill="#5c5c5c"/><path d="M8 1h22v20H8z" fill="#e8e8e8"/><path d="M8 9h14v12H8z" fill="#b5b5b5"/></svg></div>
    <div><svg viewBox="0 0 38 38"><use href="#copilot" x="2" y="2" width="34" height="34"/></svg></div>
    <div class="run"><svg viewBox="0 0 30 30"><path d="M0 2h11l3 3v6H0z" fill="#d99a07"/><path d="M0 6h30v22H0z" fill="url(#fold)"/><path d="M5 21h20v7H5z" fill="#1271c4"/><path d="M9 24h12" stroke="#063f7a" stroke-width="2"/></svg></div>
    <div><svg viewBox="0 0 30 30"><circle cx="16" cy="5" r="4.500" fill="#7b83eb"/><circle cx="25" cy="7" r="3" fill="#5059c9"/><path d="M20 11h10v8c0 5-5 6-7 5z" fill="#5059c9"/><path d="M8 11h14v9c0 12-14 11-14 2z" fill="#7b83eb"/><rect y="7" width="15" height="15" rx="1.500" fill="#464eb8"/><text x="4" y="19" class="tT">T</text></svg></div>
    <div><svg viewBox="0 0 30 30"><circle cx="15" cy="15" r="14" fill="#fff" stroke="#3c9c9c" stroke-width="2"/><path d="M17 5c5-1 8 3 8 8s-2 8-4 8c-2-4-4-5-4-10z" fill="#2a2020"/><ellipse cx="7.500" cy="14" rx="2.500" ry="4" fill="#2a2020"/><circle cx="12" cy="10" r="1.200" fill="#2a2020"/><path d="M8 6q5-3 9 0M10 18l2 7 7 2-3-8z" fill="none" stroke="#2a2020"/></svg></div>
    <div class="run"><svg viewBox="0 0 30 30"><circle cx="15" cy="15" r="14.500" fill="url(#edge)"/><path d="M1 13C7 5 18 8 18 14c-4-3-8 0-8 5 0 6 6 10 12 9C10 33-1 24 1 13z" fill="#1566b5"/><path d="M18 14c1 4-3 5 0 7 4 2 8 0 10-2-1 3-3 6-6 7-8-1-11-9-4-12z" fill="#16222d"/></svg></div>
    <div><svg viewBox="0 0 30 30"><path d="M8 7V2q0-1 1-1h12q1 0 1 1v5" fill="none" stroke="#29a3ea" stroke-width="2"/><path d="M1 6h28v20q0 3-3 3H4q-3 0-3-3z" fill="#f2f2f2"/><path d="M9 11h5.500v5.500H9z" fill="#f25022"/><path d="M15.500 11H21v5.500h-5.500z" fill="#7fba00"/><path d="M9 17.500h5.500V23H9z" fill="#00a4ef"/><path d="M15.500 17.500H21V23h-5.500z" fill="#ffb900"/></svg></div>
    <div class="run"><svg class="ov" viewBox="0 0 30 30"><circle cx="15" cy="15" r="14" fill="#fbc116"/><path d="M15 15L3 8a14 14 0 0 1 24 0z" fill="#e33b2e"/><path d="M15 15v14A14 14 0 0 1 3 8l7 9z" fill="#2ba24c"/><path d="M3 8A14 14 0 0 1 27 8H15z" fill="#e33b2e"/><circle cx="15" cy="15" r="7" fill="#fff"/><circle cx="15" cy="15" r="5.500" fill="#2f7de8"/><circle cx="26" cy="3" r="9" fill="#c9b49a"/><circle cx="26" cy="1" r="4" fill="#8a5a40"/><path d="M20 9c1-6 11-6 12 0-3 4-9 4-12 0z" fill="#66768c"/></svg></div>
    <div><svg viewBox="0 0 30 30"><rect width="30" height="30" rx="2" fill="#0096d6"/><text x="3" y="19" class="hp">my<tspan class="hpb">hp</tspan></text></svg></div>
    <div><svg class="ov" viewBox="0 0 30 30"><circle cx="15" cy="15" r="14" fill="#0d8fd6" stroke="#fff" stroke-width="2"/><text x="9" y="24" class="q">?</text><circle cx="26" cy="4" r="10" fill="#ffb90f"/></svg></div>
    <div><svg viewBox="0 0 30 30"><path d="M12 28A13 13 0 1 1 18 28" fill="none" stroke="#00caff" stroke-width="4.500"/></svg></div>
    <div><svg viewBox="0 0 30 30"><path d="M4 1h15l7 7v21H4z" fill="#f8f8f8"/><path d="M19 1v7h7z" fill="#ccc"/></svg></div>
    <div><svg viewBox="0 0 30 30"><path d="M2 2h26v20H2z" fill="#0b72c4"/><path d="M5 2h19v25H5z" fill="#1593e0"/><path d="M7 6h14v17H7z" fill="#33c3f5"/><path d="M0 22h30l-3 4H3z" fill="#0a55a0"/></svg></div>
    <div><svg viewBox="0 0 30 30"><rect y="3" width="30" height="24" rx="2" fill="#0b63b8"/><path d="M0 20l7-9 5 6 6-7 5 7 3-3 4 4v9H0z" fill="#8fd3f7"/><path d="M0 22h30v5H0z" fill="#c5eafc"/></svg></div>
    <div class="run"><svg viewBox="0 0 30 30"><rect x="7" y="1" width="23" height="28" rx="2" fill="#185abd"/><path d="M7 3q0-2 2-2h19q2 0 2 2v6H7z" fill="#41a5ee"/><path d="M7 9h23v7H7z" fill="#2b7cd3"/><rect y="7" width="15" height="15" rx="1" fill="#103f91"/><text x="1.500" y="19" class="tT">W</text></svg></div>
    <div class="run act"><svg viewBox="0 0 30 30"><path d="M16 0h11v30H16z" fill="#e8a510"/><path d="M9 8h11v22H9z" fill="#f6c62f"/><path d="M3 16h11v14H3z" fill="#fde588"/></svg></div>
    <div class="run"><svg viewBox="0 0 30 30"><circle cx="15" cy="15" r="13.500" fill="#302e31" stroke="#ddd" stroke-width="1.500"/><path d="M12 4c-3 4 0 8 4 9M26 17c-1-5-6-6-10-1M7 22c5 2 8-2 7-7" fill="none" stroke="#ccc" stroke-width="2"/></svg></div>
  </div>
  <div class="tray">
    <svg width="370" height="50" viewBox="1505 1025 370 50" fill="none" stroke="#fff" stroke-width="1.500">
      <path d="M1512 1053l6-6 6 6"/>
      <path d="M1549 1047c2-8 13-10 17-3M1567 1038v6h-6M1550 1060c-2-2-2-4-1-7M1549 1053h5M1549 1053v6" stroke="#ddd"/><circle cx="1563" cy="1055" r="5.500" fill="#ff9d0a" stroke="none"/>
      <g stroke="#8fd5e6"><rect x="1594.500" y="1040.500" width="6" height="12" rx="3"/><path d="M1591 1049c0 9 14 9 14 0M1598 1056v3"/></g>
      <path d="M1683 1047c6-6 14-6 20 0M1686 1050c4-4 10-4 14 0M1689 1053c2-3 6-3 8 0"/><circle cx="1693" cy="1056" r="1.500" fill="#fff"/>
      <path d="M1713 1047h4l5-4v14l-5-4h-4zM1726 1047c2 2 2 4 0 6"/><path d="M1729 1044c4 4 4 8 0 12" stroke="#777"/>
      <rect x="1744" y="1044" width="21" height="12" rx="3"/><path d="M1767 1048v4"/><rect x="1746" y="1046" width="5.500" height="8" fill="#ffb000" stroke="none"/>
      <g class="tt"><text x="1631" y="1045.500" textLength="29">ENG</text><text x="1638" y="1065.500" textLength="15">IN</text></g>
    </svg>
    <div class="clock">12:15<br>22-05-2025</div>
    <svg width="18" height="22" viewBox="0 0 18 22"><path d="M1 16l2-3V7c0-7 11-7 12 0v6l2 3zM6 18h6c-1 3-5 3-6 0z" fill="#fff"/><path d="M6 6h4l-4 6h4M12 2h4l-4 5h4" stroke="#1c1c1c" fill="none" stroke-width="1.500"/></svg>
  </div>
</footer>
</body>
</html>
```
FILE: styles.css
```css
*{box-sizing:border-box}
body{margin:0;width:1920px;height:1080px;overflow:hidden;font-family:"Open Sans","Noto Sans",sans-serif;font-size:14px;color:#252423;background:#f3f2f1;display:flex;flex-direction:column}
svg{display:block;flex:none;overflow:visible}
.defs{position:absolute}

.titlebar{height:43px;background:#3b3a39;color:#fff;display:flex;align-items:center;flex:none;padding:0 20px 0 20px}
.tb-undo{margin-left:19px}
.tb-redo{margin-left:19px}
.tb-title{margin-left:12px;padding-top:5px;font-size:14.600px;letter-spacing:-.18px;white-space:nowrap}
.tb-caret{border:5.500px solid transparent;border-top:6px solid #fff;border-bottom:0;margin-left:9px;margin-top:3px}
.tb-user{margin-left:auto;font-size:14.600px;letter-spacing:-.1px;margin-top:-1px}
.tb-avatar{margin-left:12px}
.tb-win{margin-left:39px;margin-top:3px}

.menu{height:42px;background:#fafafa;display:flex;align-items:flex-start;flex:none;font-size:17.200px;padding:0 7px 0 28px;position:relative;z-index:3}
.m{margin-right:39.700px;height:38px;line-height:39px;letter-spacing:-.25px;white-space:nowrap}
.m.file,.m.home{font-weight:600;letter-spacing:-.4px}
.m.file{margin-right:46px}
.m.home{border-bottom:3px solid #117865;margin-right:38px}
.share{margin-left:auto;width:105px;height:30px;border-radius:4px;background:#117865;color:#fff;font-size:14px;display:flex;align-items:center;padding-left:9px;margin-top:5px}
.share span{margin:0 6px 0 10px}

.ribbon{height:115px;background:#fafafa;display:flex;flex:none;position:relative;z-index:2;box-shadow:0 3px 4px -1px #0004;padding-top:3px}
.group{height:111px;border-right:1px solid #c8c6c4;padding-left:9px;display:flex;flex-direction:column;color:#252423}
.g-clip{width:201px;padding-left:9px}.g-data{width:449px;padding-left:10px}.g-q{width:145px;padding-left:10px}.g-i{width:183px}.g-c{width:233px}.g-s{width:92px;padding-left:10px}.g-p{width:74px}.g-o{width:164px}
.items{display:flex;height:97px}
.glabel{font-size:12.200px;text-align:center;line-height:18px;margin-left:-10px;letter-spacing:-.1px}
.btn{display:flex;flex-direction:column;align-items:center;padding-top:6px;text-align:center;font-size:14.300px;line-height:20px;white-space:nowrap;letter-spacing:-.2px}
.btn>span{margin:5px -4px 0}
.off{color:#c8c6c4}
.dd{display:inline-block;width:8px;height:6px;margin-left:2px;vertical-align:1px}
.w-paste{width:52px}.w49{width:49px}.w50{width:50px}.w51{width:51px}.w54{width:54px}.w56{width:56px}.w60{width:60px}.w62{width:62px}.w69{width:69px}.w70{width:70px}.w90{width:90px}.w92{width:92px}
.mini{padding:0 0 0 3px;color:#c8c6c4;margin-top:-1px}
.mini div{height:30px;display:flex;align-items:center;gap:4px;white-space:nowrap;letter-spacing:-.1px;font-size:14.100px}
.collapse{position:absolute;right:6px;bottom:8px}
.xl{font-size:13px;font-weight:700;fill:#fff}
.tbx{font-size:23px;fill:#1e88d0}
.fx{font:italic 23px "Liberation Serif",serif;fill:#aaa}

.work{display:flex;height:790px;flex:none}
.rail{width:51px;background:#f3f2f1;border-right:1px solid #d8d6d4}
.rail .sel{border-left:3px solid #117865}
.rail svg{margin-bottom:1px}
.dax{font-size:9px;font-weight:700;fill:#797775;stroke:none}
.center{width:1376px;display:flex;flex-direction:column}
.canvas{position:relative;height:746px;overflow:hidden;background:linear-gradient(102deg,#aaaaaa 0%,#afafaf 18%,#c2c2c1 38%,#d8d8d7 56%,#e6e6e6 72%,#eeeeee 88%,#f0f0f0 100%)}
.pageframe{position:absolute;left:32px;top:-20px;width:1312px;height:758px;border:2px dotted #5c5a58}
.v{position:absolute}
.brand{left:779px;top:295px}
.c1{left:194px;top:105px}.c2{left:629px;top:105px}.c3{left:1064px;top:105px}
.bars{left:34px;top:295px}
.pie{left:1004px;top:435px}
.date{left:39px;top:580px}
.goto{left:639px;top:692px}
.tip{left:396px;top:188px}
.num{font:500 54px Roboto,sans-serif;fill:#252423}
.big{font:500 65px Roboto,sans-serif;fill:#252423}
.cap{font-size:15.800px;fill:#605e5c}
.cap.f{font-size:17.500px}
.din{font-family:Roboto,sans-serif;font-weight:400;fill:#252423;stroke:#252423;stroke-width:.25px}
.din.t{font-size:15.500px}
.din.a{font-size:14px}
.ct{font-size:12px;fill:#605e5c}
.lt{font-size:13px;fill:#605e5c}
.dt{font-size:12.200px;fill:#252423}
.lg{font-size:75px;font-weight:300;fill:#12364a;stroke:#12364a;stroke-width:.8px}
.lg.b{font-weight:700;fill:#06324e}
.hdrbtns{position:absolute;left:974px;top:266px;display:flex;gap:4.500px}
.hdrbtns svg{background:#fff}
.slicer{left:1087px;top:301px;width:260px;font-size:15.500px}
.sl-t{font:400 14px/19px Roboto,sans-serif;letter-spacing:.65px;height:20px;-webkit-text-stroke:.25px #252423}
.slicer label{display:flex;align-items:center;height:29.500px;letter-spacing:0}
.slicer i{width:16px;height:16px;border:1px solid #605e5c;margin-right:9px}

.pages{display:flex;height:44px;background:#f3f2f1}
.views{width:159px;display:flex;padding-left:13px;border-right:1px solid #c8c6c4}
.views svg+svg{margin:6px 0 0 31px}
.ar{border:5px solid transparent;height:0;margin-top:16px}
.ar.l{border-right:6px solid #c8c6c4;border-left:0;margin-left:25px}
.ar.r{border-left:6px solid #c8c6c4;border-right:0;margin-left:22px}
.tab{background:#fff;border-right:1px solid #c8c6c4;text-align:center;line-height:45px;font-size:14.400px;letter-spacing:-.2px;white-space:nowrap}
.tab.on{font-weight:600;border-bottom:5px solid #117865;letter-spacing:-.3px}
.t1{width:150px}.t2{width:171px}.t3{width:158px}.t4{width:146px}.t5{width:120px}.t6{width:143px}
.add{width:49px;background:#117865;color:#fff;font-size:24px;font-weight:700;text-align:center;line-height:41px}

.filters{width:42px;height:746px;background:#fff;display:flex;flex-direction:column;align-items:center;padding:15px 0 0 0;border-left:1px solid #8a8886;border-right:1px solid #e1dfdd}
.filters svg+svg{margin:20px -7px 0 0}
.flip{transform:scaleX(-1)}
.filters span{writing-mode:vertical-rl;font-size:18.400px;font-weight:600;margin:10px -2px 0 0;letter-spacing:-.2px;line-height:22px}

.viz{width:226px;border-right:1px solid #e1dfdd}
.phead{display:flex;justify-content:space-between;align-items:center;height:50px;padding:0 10px}
.phead b{font-size:18.300px;font-weight:600;letter-spacing:0;margin-top:-1px}
.bv{padding-left:10px;line-height:16px;font-size:14.500px;font-weight:600;letter-spacing:-.2px}
.modes{display:flex;padding:6px 10px 0;height:46px;gap:46px;align-items:center}
.msel{background:#d2d0ce;border-radius:3px}
.notch{margin-top:4px}
.grid{display:grid;grid-template-columns:repeat(6,24px);grid-auto-rows:24px;gap:11px;padding:14px 0 0 13px}
.grid svg{width:24px;height:24px;overflow:visible}
.grid .b{fill:#83beec;stroke:#1469b8;stroke-width:1.400}
.grid .hollow{fill:#fff}
.grid .w{fill:#fff;stroke:#555;stroke-width:1.300}
.grid .soft{stroke:#888}
.grid .g{fill:#c8c6c4;stroke:#777;stroke-width:1.300}
.grid .n,.grid .nn{stroke:#444;stroke-width:1.500}
.grid .n{fill:none}
.grid .th{stroke-width:1;stroke:#666}
.i123{font-size:10px;fill:#1e88d0}
.ir{font-size:20px;font-weight:700;fill:#1e88d0}
.dots{padding-left:14px;height:46px;line-height:38px;font-size:19px;letter-spacing:2.500px;font-weight:400;border-bottom:1px solid #e1dfdd}
.wells{padding:10px 7px 0 5px;font-size:14.300px}
.wl{padding-left:10px;line-height:22px;height:27px;letter-spacing:-.1px}
.wl.dr{margin-top:13px;height:24.500px;color:#3b3a39;-webkit-text-stroke:.3px #3b3a39}
.well{background:#fff;border:1px dashed #c8c6c4;border-radius:2px}
.well.a{height:35px;line-height:33px;padding-left:13px;letter-spacing:-.05px}
.well.b{height:33px;line-height:31px;padding-left:10px;margin-top:6px;letter-spacing:0;white-space:nowrap}
.row{display:flex;justify-content:space-between;align-items:center;height:34px;padding:0 20px 0 10px;letter-spacing:-.1px}
.tg{font-style:normal;width:40px;height:20px;border:1px solid #8a8886;border-radius:10px;background:#fff;display:flex;align-items:center;justify-content:center;gap:2px;font-size:11px;color:#605e5c}
.tg i{width:10px;height:10px;border-radius:50%;background:#605e5c}
.tg.on{background:#117865;border-color:#117865;color:#fff;gap:4px}
.tg.on i{background:#fff}

.data{width:225px}
.search{height:30px;margin:8px 5px 0 5px;border:1px solid #a19f9d;border-color:#d2d0ce #d2d0ce #8a8886;border-radius:4px;background:#fff;display:flex;align-items:center;gap:9px;padding-left:14px;font-size:15.800px;color:#605e5c}
.tree{padding:10px 0 0 19px;font-size:14.300px}
.tree div{height:30px;display:flex;align-items:center;letter-spacing:-.2px}
.tree svg+svg{margin:0 6px 0 9px}

.status{height:29px;flex:none;border-top:1px solid #d8d6d4;display:flex;align-items:center;font-size:14.300px;padding:2px 22px 0 5px;letter-spacing:0;color:#3b3a39}
.status svg:nth-of-type(1){margin-left:auto}
.pct{width:30px;margin:0 23px 0 14px;letter-spacing:-.3px;color:#605e5c}

.taskbar{height:61px;flex:none;background:#1c1c1c;border-top:1px solid #444;display:flex;position:relative;color:#fff}
.weather{margin:7px 0 0 22px}
.bdg{font-size:15px;fill:#222}
.apps{display:flex;margin-left:318px;height:60px}
.apps div{width:55.100px;display:flex;justify-content:center;position:relative;padding-top:15px}
.apps svg{width:30px;height:30px}
.run::after{content:"";position:absolute;bottom:5px;width:7px;height:4px;border-radius:2px;background:#999}
.act::before{content:"";position:absolute;z-index:0;left:3px;top:4px;width:48px;height:50px;border-radius:5px;background:#2d2d2d}
.act svg{position:relative}
.act::after{width:20px;background:#4cc2ff}
.tT{font-size:12px;font-weight:700;fill:#fff}
.hp{font-size:9px;fill:#fff}
.hpb{font-size:12px;font-weight:700;font-style:italic}
.q{font-size:25px;font-weight:700;fill:#fff}
.tray{margin-left:auto;display:flex;padding:5px 25px 0 0}
.tray>svg:first-child{margin-right:-98px}
.tt{font-size:14.500px;fill:#fff;stroke:none}
.clock{width:90px;text-align:right;font-size:15px;line-height:20px;padding-top:4px;letter-spacing:-.05px;margin-right:11px;white-space:nowrap}
.tray>svg:last-child{margin-top:14px}
```
